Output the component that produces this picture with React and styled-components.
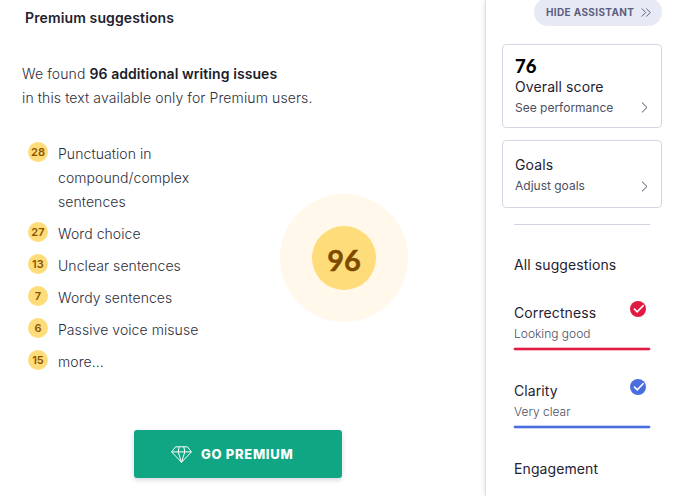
import React from "react";
import styled, { createGlobalStyle } from "styled-components";

const GlobalStyle = createGlobalStyle`
  * { box-sizing: border-box; }
  body {
    margin: 0;
    background: #fff;
    font-family: Inter, "Liberation Sans", sans-serif;
    color: #1f2230;
    overflow: hidden;
  }
`;

const Page = styled.div`
  display: grid;
  grid-template-columns: 486px 1fr;
  height: 496px;
  overflow: hidden;
`;

const Main = styled.main`
  display: flex;
  flex-direction: column;
  padding: 6px 0 0 22px;
`;

const Heading = styled.h1`
  margin: 0 0 32px 3px;
  font-size: 14px;
  line-height: 24px;
  font-weight: 600;
  letter-spacing: 0.13px;
`;

const Intro = styled.p`
  margin: 0;
  font-size: 14px;
  line-height: 24px;
  font-weight: 300;
  color: #2c2e3a;
  letter-spacing: 0.11px;

  strong {
    font-weight: 600;
    color: #1b1d29;
    letter-spacing: 0.07px;
  }
`;

const Summary = styled.section`
  display: flex;
  height: 232px;
  margin-top: 32px;
`;

const IssueList = styled.ul`
  display: flex;
  flex-direction: column;
  gap: 8px;
  width: 258px;
  margin: 0;
  padding: 0 0 0 6px;
  list-style: none;
`;

const Issue = styled.li`
  display: flex;
  gap: 10px;
  width: 200px;
  font-size: 14px;
  line-height: 24px;
  font-weight: 300;
  color: #2c2e3a;
  letter-spacing: 0.07px;
`;

const IssueName = styled.span`
  max-width: 150px;
`;

const Count = styled.span`
  flex: none;
  width: 20px;
  height: 20px;
  border-radius: 50%;
  background: #ffdc7a;
  color: #8a5200;
  font-size: 11px;
  line-height: 20px;
  font-weight: 600;
  text-align: center;
`;

const Halo = styled.div`
  display: flex;
  align-items: center;
  justify-content: center;
  width: 128px;
  height: 128px;
  margin-top: 52px;
  border-radius: 50%;
  background: #fff8eb;
`;

const Total = styled.div`
  width: 64px;
  height: 64px;
  border-radius: 50%;
  background: #ffdc7a;
  color: #7d4a00;
  font-family: Lato, sans-serif;
  font-size: 29px;
  line-height: 67px;
  font-weight: 700;
  text-align: center;
  -webkit-text-stroke: 0.4px #7d4a00;
`;

const PremiumButton = styled.button`
  display: flex;
  align-items: center;
  gap: 9px;
  width: 208px;
  height: 48px;
  margin: 56px 0 0 112px;
  padding: 0 0 0 37px;
  border: 0;
  border-radius: 3px;
  background: #11a683;
  box-shadow: 0 2px 5px rgba(40, 50, 90, 0.2);
  color: #fff;
  font-family: inherit;
  font-size: 13px;
  font-weight: 800;
  letter-spacing: 0.7px;
`;

const Side = styled.aside`
  display: flex;
  flex-direction: column;
  padding: 0 15px 0 16px;
  box-shadow: 0 0 1px rgba(0, 0, 0, 0.25), -1px 0 5px rgba(0, 0, 0, 0.14);
`;

const HideButton = styled.button`
  display: flex;
  align-items: center;
  align-self: flex-end;
  gap: 7px;
  flex: none;
  width: 128px;
  height: 28px;
  margin-top: -2px;
  padding: 0 0 0 12px;
  border: 0;
  border-radius: 14px;
  background: #e7e9f5;
  color: #5b5f7e;
  font-family: inherit;
  font-size: 10px;
  font-weight: 700;
  letter-spacing: 0.36px;
  white-space: nowrap;
`;

const Card = styled.section`
  flex: none;
  height: ${(p) => p.$height}px;
  margin-top: ${(p) => p.$gap}px;
  padding: ${(p) => p.$top}px 13px 0 12px;
  border: 1px solid #d5d6e2;
  border-radius: 4px;
`;

const Score = styled.div`
  color: #000;
  font-family: Lato, sans-serif;
  font-size: 18.5px;
  line-height: 22px;
  font-weight: 900;
`;

const Title = styled.div`
  font-size: 14px;
  line-height: 20px;
  font-weight: 400;
  letter-spacing: 0.1px;
`;

const CardLink = styled.div`
  display: flex;
  align-items: center;
  justify-content: space-between;
  height: 20px;
  font-size: 12px;
  font-weight: 400;
  color: #4c4f60;
  letter-spacing: 0;

  svg {
    margin-top: ${(p) => p.$drop || 0}px;
  }
`;

const Divider = styled.hr`
  flex: none;
  width: 136px;
  height: 1px;
  margin: 16px 0 30px 12px;
  border: 0;
  background: #d3d4e3;
`;

const Categories = styled.nav`
  display: flex;
  flex-direction: column;
  gap: 28px;
  width: 136px;
  margin-left: 12px;
`;

const Category = styled.div`
  height: ${(p) => (p.$color ? 50 : 20)}px;
`;

const CategoryHead = styled.div`
  display: flex;
  justify-content: space-between;
  height: 20px;
  padding-right: 4px;

  svg {
    margin-top: -2px;
  }
`;

const Status = styled.div`
  margin-top: 2px;
  font-size: 12px;
  line-height: 18px;
  font-weight: 300;
  color: #4c4f5e;
`;

const Meter = styled.div`
  height: 2px;
  margin-top: 5px;
  border-radius: 1px;
  background: ${(p) => p.$color};
  box-shadow: 0 0 0.8px 0.3px ${(p) => p.$color};
`;

const issues = [
  [28, "Punctuation in compound/complex sentences"],
  [27, "Word choice"],
  [13, "Unclear sentences"],
  [7, "Wordy sentences"],
  [6, "Passive voice misuse"],
  [15, "more..."],
];

const categories = [
  { name: "All suggestions" },
  { name: "Correctness", status: "Looking good", color: "#e01a41" },
  { name: "Clarity", status: "Very clear", color: "#4a6ee0" },
  { name: "Engagement" },
];

const Diamond = () => (
  <svg width="21" height="17" viewBox="0 0 21 17" fill="none" stroke="#fff" strokeWidth="1" strokeLinejoin="round">
    <path d="M4.6.8h11.8l4 5.1-9.9 10.4L.6 5.9zM.6 5.9h19.8M8.2.8l-1 5.1 3.3 10.4 3.3-10.4-1-5.1" />
  </svg>
);

const DoubleChevron = () => (
  <svg width="10" height="9" viewBox="0 0 10 9" fill="none" stroke="#5b5f7e">
    <path d="M.7.5l4 4-4 4M5.3.5l4 4-4 4" />
  </svg>
);

const Chevron = () => (
  <svg width="7" height="11" viewBox="0 0 7 11" fill="none" stroke="#4c4f60">
    <path d="M1 .6l5 4.9-5 4.9" />
  </svg>
);

const Check = ({ color }) => (
  <svg width="16" height="16" viewBox="0 0 16 16" fill="none">
    <circle cx="8" cy="8" r="8" fill={color} />
    <path d="M4 7.6l3.2 3.2 6.4-6.6" stroke="#fff" strokeWidth="1.6" />
  </svg>
);

export default function App() {
  return (
    <Page>
      <GlobalStyle />
      <Main>
        <Heading>Premium suggestions</Heading>
        <Intro>
          We found <strong>96 additional writing issues</strong>
          <br />
          in this text available only for Premium users.
        </Intro>
        <Summary>
          <IssueList>
            {issues.map(([count, name]) => (
              <Issue key={name}>
                <Count>{count}</Count>
                <IssueName>{name}</IssueName>
              </Issue>
            ))}
          </IssueList>
          <Halo>
            <Total>96</Total>
          </Halo>
        </Summary>
        <PremiumButton>
          <Diamond />
          GO PREMIUM
        </PremiumButton>
      </Main>
      <Side>
        <HideButton>
          HIDE ASSISTANT
          <DoubleChevron />
        </HideButton>
        <Card $height={84} $gap={18} $top={10}>
          <Score>76</Score>
          <Title>Overall score</Title>
          <CardLink>
            See performance
            <Chevron />
          </CardLink>
        </Card>
        <Card $height={68} $gap={12} $top={14}>
          <Title>Goals</Title>
          <CardLink $drop={3}>
            Adjust goals
            <Chevron />
          </CardLink>
        </Card>
        <Divider />
        <Categories>
          {categories.map(({ name, status, color }) => (
            <Category key={name} $color={color}>
              <CategoryHead>
                <Title>{name}</Title>
                {color && <Check color={color} />}
              </CategoryHead>
              {status && <Status>{status}</Status>}
              {color && <Meter $color={color} />}
            </Category>
          ))}
        </Categories>
      </Side>
    </Page>
  );
}
